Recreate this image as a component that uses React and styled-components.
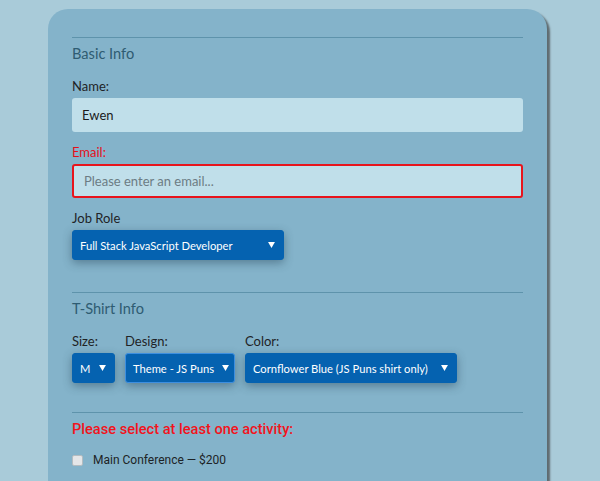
import styled, { createGlobalStyle } from "styled-components";

const GlobalStyle = createGlobalStyle`
  html, body {
    margin: 0;
    background: #a9cbd9;
    font-family: "Lato", "Liberation Sans", sans-serif;
  }
`;

function Select({ children, width, focused }) {
  return (
    <StSelect $width={width} $focused={focused}>
      <span>{children}</span>
      <StCaret viewBox="0 0 8 7" aria-hidden="true">
        <path d="M0 0 H8 L4 7 Z" fill="#fff" />
      </StCaret>
    </StSelect>
  );
}

export default function App() {
  return (
    <>
      <GlobalStyle />
      <StCard>
        <StFieldset $bottom="32px">
          <StLegend>Basic Info</StLegend>
          <StLabel>Name:</StLabel>
          <StInput defaultValue="Ewen" />
          <StLabel $error>Email:</StLabel>
          <StInput $error placeholder="Please enter an email..." />
          <StLabel>Job Role</StLabel>
          <Select width="212px">Full Stack JavaScript Developer</Select>
        </StFieldset>

        <StFieldset $bottom="29px">
          <StLegend>T-Shirt Info</StLegend>
          <StShirtRow>
            <StShirtField>
              <StLabel>Size:</StLabel>
              <Select width="43px">M</Select>
            </StShirtField>
            <StShirtField>
              <StLabel>Design:</StLabel>
              <Select width="110px" focused>
                Theme - JS Puns
              </Select>
            </StShirtField>
            <StShirtField>
              <StLabel>Color:</StLabel>
              <Select width="212px">Cornflower Blue (JS Puns shirt only)</Select>
            </StShirtField>
          </StShirtRow>
        </StFieldset>

        <StFieldset $bottom="40px">
          <StActivityTitle>Please select at least one activity:</StActivityTitle>
          <StActivity>
            <StCheckbox type="checkbox" />
            Main Conference — $200
          </StActivity>
        </StFieldset>
      </StCard>
    </>
  );
}

const StCard = styled.form`
  box-sizing: border-box;
  width: 499px;
  min-height: 520px;
  margin: 9px 0 0 48px;
  padding: 28px 24px 0;

  background: #84b3ca;
  border-radius: 20px;
  box-shadow: 3px 3px 2px #5f6b70;
`;

const StFieldset = styled.section`
  display: flex;
  flex-direction: column;
  align-items: flex-start;

  border-top: 1px solid #5e93ab;
  padding-top: 6px;
  padding-bottom: ${({ $bottom }) => $bottom};
`;

const StLegend = styled.h2`
  margin: 0 0 14px;
  font-size: 14.6px;
  font-weight: 400;
  line-height: 20px;
  color: #2f5c72;
`;

const StLabel = styled.label`
  display: block;
  margin-bottom: 4px;
  font-size: 13px;
  line-height: 16px;
  color: ${({ $error }) => ($error ? "#e4101a" : "#1f2326")};
`;

const StInput = styled.input`
  box-sizing: border-box;
  width: 100%;
  height: 34px;
  margin: 0 0 12px;
  padding: 0 10px;

  border: ${({ $error }) => ($error ? "2px solid #e8141c" : "none")};
  border-radius: 3px;
  background: #c0dfea;
  outline: none;

  font-family: "Lato", "Liberation Sans", sans-serif;
  font-size: 13px;
  color: #1b1b1b;

  &::placeholder {
    color: #6c7c84;
  }
`;

const StSelect = styled.div`
  box-sizing: border-box;
  display: flex;
  flex-shrink: 0;
  align-items: center;
  justify-content: space-between;

  width: ${({ $width }) => $width};
  height: 30px;
  padding: 0 7px 0 7px;

  background: #0562b0;
  border: 1px solid ${({ $focused }) => ($focused ? "#3d8fe0" : "#0562b0")};
  border-radius: 3px;
  box-shadow: 0 3px 10px rgba(30, 60, 80, 0.45);

  font-size: 11.2px;
  color: #ffffff;
  white-space: nowrap;
  overflow: hidden;
`;

const StCaret = styled.svg`
  flex-shrink: 0;
  width: 7px;
  height: 6px;
  margin-left: 8px;
  margin-right: 1px;
`;

const StShirtRow = styled.div`
  display: flex;
  gap: 10px;
`;

const StShirtField = styled.div`
  display: flex;
  flex-direction: column;
`;

const StActivityTitle = styled.h3`
  margin: 0 0 14px;
  font-family: "Roboto", "Liberation Sans", sans-serif;
  font-size: 14.6px;
  font-weight: 500;
  line-height: 20px;
  color: #f2141c;
`;

const StActivity = styled.label`
  display: flex;
  align-items: center;
  gap: 10px;
  font-family: "Roboto", "Liberation Sans", sans-serif;
  font-size: 12px;
  color: #1d2326;
`;

const StCheckbox = styled.input`
  appearance: none;
  box-sizing: border-box;
  width: 11px;
  height: 11px;
  margin: 0;
  border: 1px solid #b4bcc0;
  border-radius: 2px;
  background: #e4e6e8;
`;
